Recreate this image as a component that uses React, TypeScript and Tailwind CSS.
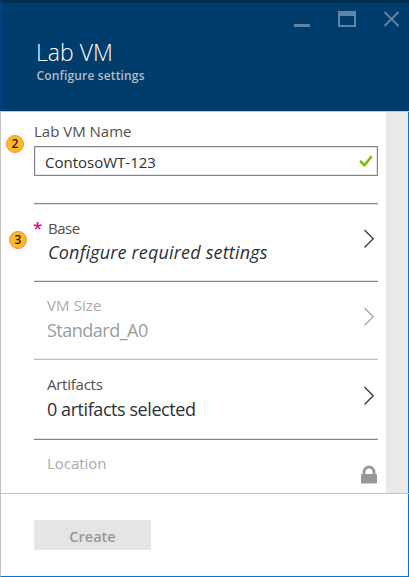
import type { ReactNode } from "react";

function Chevron({ muted = false }: { muted?: boolean }) {
  return (
    <svg width="12" height="20" viewBox="0 0 12 20" fill="none" className={muted ? "text-[#aaaaaa]" : "text-[#3c3f45]"}>
      <path d="M1.5 1 L10.2 9.8 L1.5 18.6" stroke="currentColor" strokeWidth="1.4" />
    </svg>
  );
}

function Step({ value, className }: { value: number; className: string }) {
  return (
    <span
      className={`absolute flex h-[18px] w-[18px] items-center justify-center rounded-full border border-[#f08a50] bg-[#fdb924] font-['Open_Sans',sans-serif] text-[12px] leading-none font-semibold text-[#222] ${className}`}
    >
      {value}
    </span>
  );
}

function Row({ children, icon, className }: { children: ReactNode; icon: ReactNode; className: string }) {
  return (
    <div className={`ml-[33px] flex w-[344px] shrink-0 justify-between ${className}`}>
      <div className="whitespace-nowrap">{children}</div>
      {icon}
    </div>
  );
}

export default function App() {
  return (
    <div className="relative flex h-[577px] w-[409px] flex-col overflow-hidden bg-white font-['Open_Sans','Noto_Sans',sans-serif] font-[370]">
      <header className="flex h-[111px] shrink-0 justify-between border-t-[3px] border-l-[3px] border-t-[#002f54] border-l-[#00417a] bg-[#003c6c]">
        <div className="pt-[33px] pl-[33px] whitespace-nowrap">
          <h1 className="h-[31px] text-[23px] leading-[32px] font-light text-white">Lab VM</h1>
          <p className="pl-[0.5px] text-[12px] leading-[18px] font-semibold tracking-[0.15px] text-[#b5bbc1]">Configure settings</p>
        </div>
        <svg width="115" height="30" viewBox="294 3 115 30" className="shrink-0 text-[#5f83a2]" fill="none" stroke="currentColor">
          <path d="M294 25.5H310" strokeWidth="3" />
          <path d="M339 11V26H355V11" strokeWidth="2" />
          <path d="M338 13.5H356" strokeWidth="5" />
          <path d="M384.5 12L398.5 26M398.5 12L384.5 26" strokeWidth="2" />
        </svg>
      </header>

      <main className="flex h-[383px] shrink-0 border-t border-b border-l border-[#c3c3c3]">
        <div className="flex w-[385px] shrink-0 flex-col">
          <div className="ml-[33px] flex h-[92px] w-[344px] shrink-0 flex-col border-b border-[#84858c] pt-[9px] shadow-[0_1px_0_#e0e1e5]">
            <label className="h-[25px] text-[15px] leading-[21px] text-[#505050]">Lab VM Name</label>
            <div className="flex h-[30px] items-center justify-between border border-[#84858c] pr-[4px] pl-[10px] text-[15px] leading-[28px] text-[#2d3038] shadow-[inset_0_0_0_1px_#e3e4e8]">
              <span className="pt-[2px] whitespace-nowrap">ContosoWT-123</span>
              <svg width="14" height="12" viewBox="0 0 14 12" fill="none">
                <path d="M1 5.8L5.5 10.2L12.7 1.2" stroke="#7fba00" strokeWidth="2.5" />
              </svg>
            </div>
          </div>

          <Row className="h-[78px] border-b border-[#84858c] pt-[13px] pr-[3px] pl-[14px] shadow-[inset_0_-1px_0_#e0e1e5,inset_0_1px_0_#e0e1e5]" icon={<div className="pt-[12px]"><Chevron /></div>}>
            <div className="h-[22px] text-[15px] leading-[22px] tracking-[-0.5px] text-[#505050]">Base</div>
            <div className="text-[18px] leading-[26px] tracking-[0.18px] text-[#2d3038] italic">Configure required settings</div>
          </Row>

          <Row className="h-[78px] border-b border-[#bdbdbf] pt-[12px] pr-[3px] pl-[13px] shadow-[inset_0_-1px_0_#ececee]" icon={<div className="pt-[13px]"><Chevron muted /></div>}>
            <div className="h-[22px] text-[15px] leading-[22px] tracking-[0.1px] text-[#aaaaaa]">VM Size</div>
            <div className="text-[18px] leading-[29px] tracking-[-0.5px] text-[#999c9f]">Standard_A0</div>
          </Row>

          <Row className="h-[80px] border-b border-[#84858c] pt-[13px] pr-[3px] pl-[13px] shadow-[inset_0_-1px_0_#e0e1e5]" icon={<div className="pt-[13px]"><Chevron /></div>}>
            <div className="h-[22px] text-[15px] leading-[22px] tracking-[-0.25px] text-[#505050]">Artifacts</div>
            <div className="text-[18px] leading-[29px] tracking-[-0.43px] text-[#2d3038]">0 artifacts selected</div>
          </Row>

          <Row
            className="h-[53px] pt-[12px] pl-[13px]"
            icon={
              <svg width="18" height="20" viewBox="0 0 18 20" className="mt-[13px] shrink-0">
                <path d="M4 10V7a5 5 0 0 1 10 0v3" fill="none" stroke="#95999c" strokeWidth="2.8" />
                <rect x="1" y="9" width="16" height="9.5" rx="1" fill="#95999c" />
              </svg>
            }
          >
            <div className="text-[15px] leading-[22px] tracking-[-0.05px] text-[#aaaaaa]">Location</div>
          </Row>
        </div>
        <div className="flex-1 border-r border-[#1474bf] bg-[#eaeaea]" />
      </main>

      <footer className="flex-1 border-r border-b border-l border-r-[#0078d7] border-b-[#0078d7] border-l-[#c3c3c3] pt-[26px] pl-[33px]">
        <button className="flex h-[30px] w-[117px] items-center justify-center bg-[#e5e5e5] pt-[4px] text-[14.5px] font-semibold text-[#95999c]">Create</button>
      </footer>

      <Step value={2} className="top-[135px] left-[6px]" />
      <Step value={3} className="top-[231px] left-[9px]" />
      <span className="absolute top-[217px] left-[33px] text-[17px] leading-[22px] font-semibold text-[#ec008c]">*</span>
    </div>
  );
}
